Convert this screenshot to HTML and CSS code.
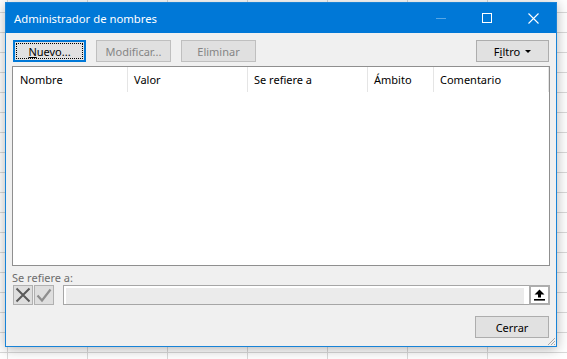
FILE: index.html
```html
<!DOCTYPE html>
<html lang="es">
<head>
    <meta charset="UTF-8">
    <title>Administrador de nombres</title>
    <link rel="stylesheet" href="styles.css">
</head>
<body>
    <div class="dialog">
        <div class="titlebar">
            <span class="title">Administrador de nombres</span>
            <span class="win-btn min"><span class="min-line"></span></span>
            <span class="win-btn"><span class="max-box"></span></span>
            <span class="win-btn">
                <svg width="11" height="11" viewBox="0 0 11 11"><path d="M0.5 0.5 L10.5 10.5 M10.5 0.5 L0.5 10.5" stroke="#fff" stroke-width="1.1" fill="none"/></svg>
            </span>
        </div>

        <div class="content">
            <div class="toolbar">
                <button class="btn default narrow"><span><u>N</u>uevo...</span></button>
                <button class="btn disabled">Modificar...</button>
                <button class="btn disabled">Eliminar</button>
                <button class="btn narrow filter"><span>F<u>i</u>ltro</span><span class="caret"></span></button>
            </div>

            <div class="list">
                <div class="list-head">
                    <div class="col c1">Nombre</div>
                    <div class="col c2">Valor</div>
                    <div class="col c3">Se refiere a</div>
                    <div class="col c4">Ámbito</div>
                    <div class="col c5">Comentario</div>
                </div>
            </div>

            <div class="ref-label">Se refiere a:</div>
            <div class="ref-row">
                <span class="icon-btn">
                    <svg width="16" height="16" viewBox="0 0 16 16"><path d="M1.5 1.5 L14.5 14.5 M14.5 1.5 L1.5 14.5" stroke="#5a5a5a" stroke-width="2" fill="none"/></svg>
                </span>
                <span class="icon-btn">
                    <svg width="16" height="16" viewBox="0 0 16 16"><path d="M1.5 8.5 L6 13.5 L14.5 2.5" stroke="#8e8e8e" stroke-width="2.2" fill="none"/></svg>
                </span>
                <div class="ref-input"><div class="ref-fill"></div></div>
                <span class="ref-pick">
                    <svg width="11" height="12" viewBox="0 0 11 12"><path d="M5.5 0.5 L10.5 5.5 H7 V8.5 H4 V5.5 H0.5 Z" fill="#000"/><rect x="0" y="10" width="11" height="1.6" fill="#000"/></svg>
                </span>
            </div>

            <div class="footer">
                <button class="btn">Cerrar</button>
            </div>
        </div>

        <svg class="grip" width="9" height="9" viewBox="0 0 9 9">
            <path d="M8 1 L1 8 M8 4 L4 8 M8 7 L7 8" stroke="#a8a8a8" stroke-width="1" fill="none"/>
        </svg>
    </div>
</body>
</html>
```

FILE: styles.css
```css
html, body {
    margin: 0;
    height: 100%;
}

body {
    box-sizing: border-box;
    padding: 2px 0 0 5px;
    overflow: hidden;
    background-color: #fff;
    background-image:
        linear-gradient(to right, #d9d9d9 1px, transparent 1px),
        linear-gradient(to bottom, #d9d9d9 1px, transparent 1px);
    background-size: 80px 100%, 100% 20px;
    background-position: 7px 0, 0 12px;
}

.dialog {
    position: relative;
    width: 552px;
    height: 345px;
    box-sizing: border-box;
    border: 1px solid #1883d7;
    background: #f0f0f0;
    box-shadow: 0 2px 12px rgba(0, 0, 0, 0.3);
    display: flex;
    flex-direction: column;
    font-family: "Noto Sans", "Open Sans", sans-serif;
    font-size: 11px;
    color: #000;
}

.titlebar {
    height: 30px;
    flex: none;
    background: #0078d7;
    color: #fff;
    display: flex;
    align-items: center;
}

.title {
    flex: 1;
    padding-left: 8px;
    font-size: 11.3px;
}

.win-btn {
    width: 46px;
    height: 30px;
    display: flex;
    align-items: center;
    justify-content: center;
}

.min-line {
    width: 10px;
    height: 1px;
    background: rgba(255, 255, 255, 0.35);
}

.max-box {
    width: 8px;
    height: 8px;
    border: 1px solid #fff;
}

.content {
    flex: 1;
    padding: 7px 6px 0;
    display: flex;
    flex-direction: column;
}

.toolbar {
    display: flex;
    gap: 10px;
    height: 22px;
    padding: 0 1px;
}

.btn {
    position: relative;
    width: 75px;
    height: 22px;
    box-sizing: border-box;
    border: 1px solid #adadad;
    background: #e1e1e1;
    font: inherit;
    color: #000;
    padding: 0;
    display: flex;
    align-items: center;
    justify-content: center;
}

.btn.narrow {
    width: 73px;
}

.btn.default {
    border: 2px solid #0078d7;
}

.btn.default::after {
    content: "";
    position: absolute;
    inset: 1px;
    border: 1px dotted #000;
}

.btn.disabled {
    background: #e0e0e0;
    border-color: #bfbfbf;
    color: #858585;
}

.btn.filter {
    margin-left: auto;
}

.caret {
    width: 0;
    height: 0;
    margin-left: 5px;
    margin-top: 1px;
    border-left: 3px solid transparent;
    border-right: 3px solid transparent;
    border-top: 3px solid #000;
}

.list {
    margin-top: 4px;
    height: 200px;
    flex: none;
    box-sizing: border-box;
    border: 1px solid #8f8f8f;
    background: #fff;
}

.list-head {
    display: flex;
    height: 25px;
}

.col {
    box-sizing: border-box;
    border-right: 1px solid #e5e5e5;
    padding-left: 6px;
    display: flex;
    align-items: center;
}

.c1 { width: 115px; padding-left: 7px; }
.c2 { width: 120px; }
.c3 { width: 120px; }
.c4 { width: 66px; }
.c5 { width: 115px; }

.ref-label {
    margin-top: 4px;
    height: 15px;
    line-height: 15px;
    color: #6d6d6d;
}

.ref-row {
    display: flex;
    height: 20px;
    padding-left: 1px;
}

.icon-btn {
    width: 20px;
    height: 20px;
    box-sizing: border-box;
    border: 1px solid #b0b0b0;
    background: #dedede;
    display: flex;
    align-items: center;
    justify-content: center;
}

.icon-btn + .icon-btn {
    margin-left: 1px;
}

.ref-input {
    flex: 1;
    margin-left: 9px;
    box-sizing: border-box;
    border: 1px solid #a6a6a6;
    border-right: none;
    background: #fff;
    padding: 2px 5px 0 2px;
    display: flex;
}

.ref-fill {
    flex: 1;
    background: #ebebeb;
}

.ref-pick {
    width: 21px;
    height: 20px;
    box-sizing: border-box;
    border: 2px solid #adadad;
    background: #fff;
    display: flex;
    align-items: center;
    justify-content: center;
}

.footer {
    margin-top: 11px;
    display: flex;
    justify-content: flex-end;
    padding-right: 1px;
}

.footer .btn {
    width: 74px;
}

.grip {
    position: absolute;
    right: 0;
    bottom: 0;
}
```
